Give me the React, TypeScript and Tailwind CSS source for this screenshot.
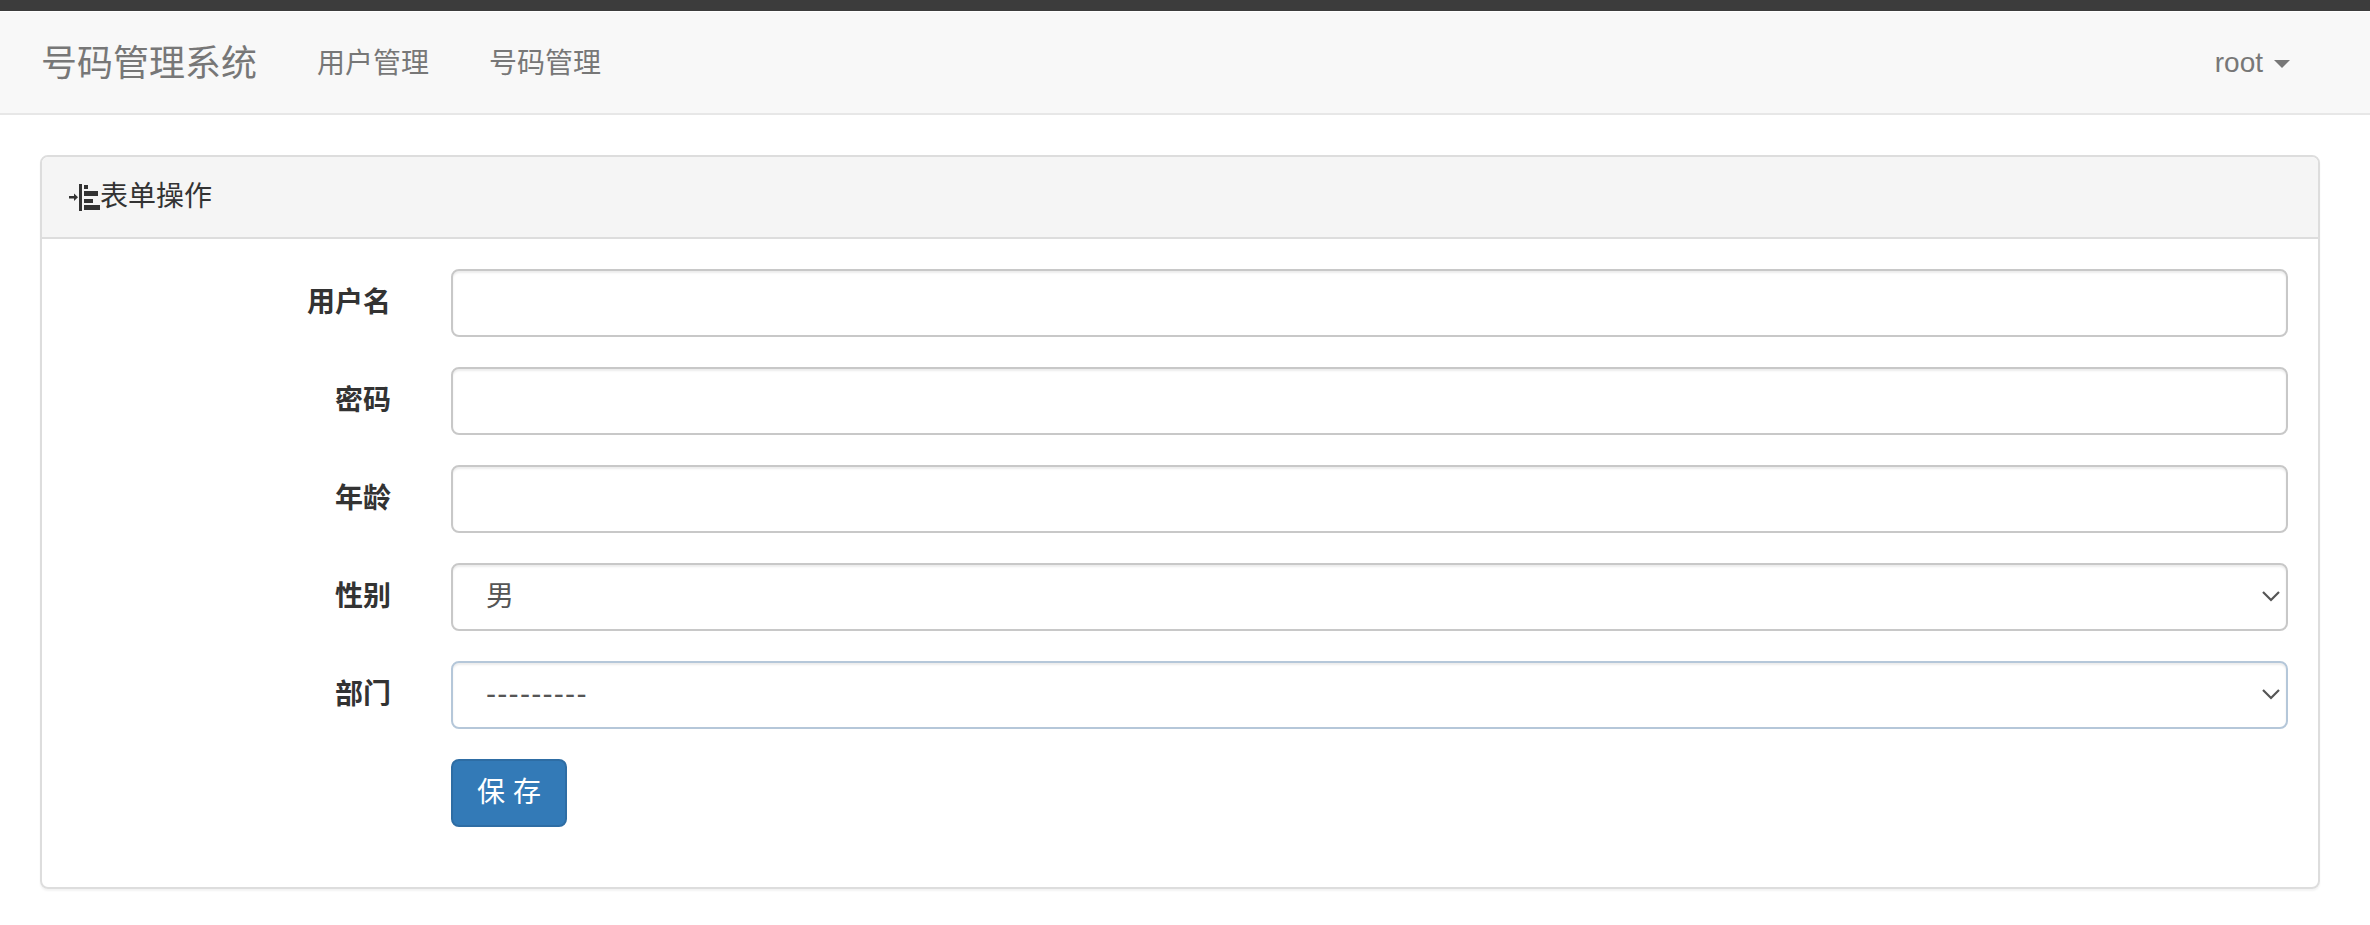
import React from 'react';

const Field: React.FC<{ label: string; children: React.ReactNode }> = ({ label, children }) => (
  <div className="flex items-center mb-[30px]">
    <label className="w-[349px] text-right font-bold text-[28px] leading-[40px] text-[#333]">{label}</label>
    <div className="ml-[60px] flex-1">{children}</div>
  </div>
);

const baseCls =
  'block w-full h-[68px] rounded-[8px] border-2 bg-white text-[28px] text-[#555] shadow-[inset_0_2px_2px_rgba(0,0,0,0.075)] outline-none';

const FakeSelect: React.FC<{ value: string; focused?: boolean }> = ({ value, focused }) => (
  <div className="relative">
    <select
      defaultValue={value}
      className={`${baseCls} appearance-none pl-[33px] ${focused ? "border-[#b5c7d9] tracking-[1.2px] font-['DejaVu_Sans',sans-serif]" : 'border-[#c8c8c8]'}`}
    >
      <option>{value}</option>
    </select>
    <svg className="absolute right-[8px] top-[27px] w-[18px] h-[12px] pointer-events-none" viewBox="0 0 18 12" fill="none" stroke="#555" strokeWidth="2.2">
      <path d="M1 2l8 8 8-8" />
    </svg>
  </div>
);

export default function App() {
  return (
    <div className="min-h-[925px] bg-white font-['Liberation_Sans','Noto_Sans_CJK_SC',sans-serif]">
      <div className="h-[11px] bg-[#3c3c3c]" />
      <nav className="mt-[1px] h-[103px] bg-[#f8f8f8] border-b-2 border-[#e7e7e7] flex items-center pl-[41px] pr-[79px] text-[#777]">
        <span className="text-[36px] mr-[60px] mt-[2px]">号码管理系统</span>
        <a className="text-[28px] mr-[60px] mt-[2px]">用户管理</a>
        <a className="text-[28px] mt-[2px]">号码管理</a>
        <div className="ml-auto flex items-center text-[28px] pr-[1px]">
          root
          <span className="ml-[11px] w-0 h-0 border-x-[8px] border-x-transparent border-t-[8px] border-t-[#777] mt-[3px]" />
        </div>
      </nav>
      <div className="mt-[40px] ml-[40px] mr-[50px] h-[734px] border-2 border-[#ddd] rounded-[8px] shadow-[0_2px_2px_rgba(0,0,0,0.05)] overflow-hidden">
        <div className="h-[82px] bg-[#f5f5f5] border-b-2 border-[#ddd] flex items-center pl-[27px] text-[28px] text-[#333]">
          <svg className="w-[31px] h-[27px]" viewBox="0 0 31 27" fill="#333">
            <rect x="0" y="12" width="6" height="2.5" />
            <path d="M5 9.5l4 3.75-4 3.75z" />
            <rect x="10" y="0" width="3" height="27" />
            <rect x="15" y="1" width="4" height="4" />
            <rect x="15" y="7" width="14" height="5" />
            <rect x="15" y="15" width="9" height="4" />
            <rect x="15" y="21" width="16" height="5" />
          </svg>
          表单操作
        </div>
        <div className="pt-[30px] pr-[30px]">
          <Field label="用户名"><input className={`${baseCls} px-[24px] border-[#c8c8c8]`} /></Field>
          <Field label="密码"><input className={`${baseCls} px-[24px] border-[#c8c8c8]`} /></Field>
          <Field label="年龄"><input className={`${baseCls} px-[24px] border-[#c8c8c8]`} /></Field>
          <Field label="性别"><FakeSelect value="男" /></Field>
          <Field label="部门"><FakeSelect value="---------" focused /></Field>
          <div className="ml-[409px]">
            <button className="w-[116px] h-[68px] rounded-[8px] bg-[#337ab7] border-2 border-[#2e6da4] text-white text-[28px]">保 存</button>
          </div>
        </div>
      </div>
    </div>
  );
}
